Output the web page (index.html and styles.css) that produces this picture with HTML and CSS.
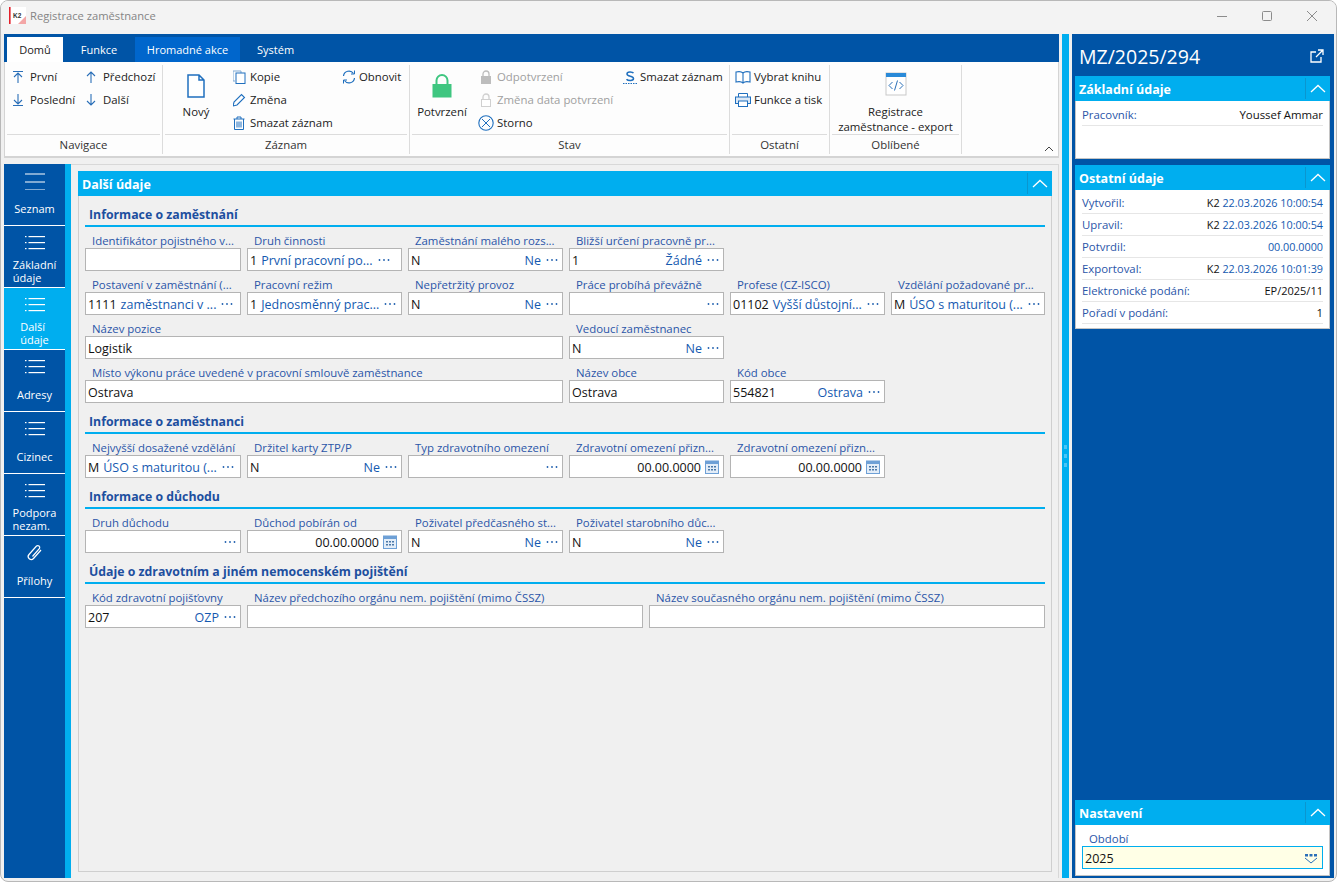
FILE: index.html
```html
<!DOCTYPE html>
<html lang="cs">
<head>
  <meta charset="UTF-8">
  <title>Registrace zaměstnance</title>
  <link rel="stylesheet" href="styles.css">
</head>
<body>

<svg class="defs" width="0" height="0">
  <symbol id="dots" viewBox="0 0 12 4"><circle cx="1.5" cy="2" r="0.9"/><circle cx="6" cy="2" r="0.9"/><circle cx="10.5" cy="2" r="0.9"/></symbol>
  <symbol id="chev" viewBox="0 0 16 9"><path d="M1 8 8 1.5 15 8" fill="none" stroke="#fff" stroke-width="1.3"/></symbol>
  <symbol id="listicon" viewBox="0 0 20 14"><g fill="#fff"><rect x="3.5" y="0" width="16.5" height="1.2"/><rect x="3.5" y="6" width="16.5" height="1.2"/><rect x="3.5" y="12" width="16.5" height="1.2"/><rect x="0" y="0" width="1.5" height="1.2"/><rect x="0" y="6" width="1.5" height="1.2"/><rect x="0" y="12" width="1.5" height="1.2"/></g></symbol>
  <symbol id="cal" viewBox="0 0 14 14"><rect x="0.5" y="1" width="13" height="12.5" fill="#e3edf8" stroke="#6ea0d6"/><rect x="0.5" y="1" width="13" height="3" fill="#6ea0d6"/><g fill="#4a78a8"><rect x="3" y="6" width="2" height="1.5"/><rect x="6" y="6" width="2" height="1.5"/><rect x="9" y="6" width="2" height="1.5"/><rect x="3" y="9" width="2" height="1.5"/><rect x="6" y="9" width="2" height="1.5"/><rect x="9" y="9" width="2" height="1.5"/></g></symbol>
</svg>

<div class="window">

  <div class="titlebar">
    <svg class="logo" width="17" height="17" viewBox="0 0 17 17">
      <rect x="0" y="0" width="17" height="17" fill="#fff"/>
      <rect x="0" y="0" width="1.6" height="17" fill="#e3202a"/>
      <path d="M9 17 17 9v8z" fill="#f3a6a6"/>
      <text x="4" y="10.5" class="logo-text">K2</text>
    </svg>
    <span class="title-text">Registrace zaměstnance</span>
    <div class="winbtns">
      <svg width="12" height="12" viewBox="0 0 12 12"><path d="M1 6.5h10" stroke="#8c8c8c"/></svg>
      <svg width="12" height="12" viewBox="0 0 12 12"><rect x="1.5" y="1.5" width="9" height="9" rx="1" fill="none" stroke="#8c8c8c"/></svg>
      <svg width="12" height="12" viewBox="0 0 12 12"><path d="M1 1 11 11M11 1 1 11" stroke="#8c8c8c"/></svg>
    </div>
  </div>

  <div class="main">
    <div class="left">

      <div class="tabs">
        <div class="tab tab-active">Domů</div>
        <div class="tab tab-funkce">Funkce</div>
        <div class="tab tab-bulk">Hromadné akce</div>
        <div class="tab">Systém</div>
      </div>

      <div class="ribbon">
        <!-- Navigace -->
        <div class="group g-nav">
          <div class="group-body">
            <div class="col c-nav1">
              <div class="ritem"><svg class="ico" viewBox="2 0 14 14"><path d="M2 1.5h10M7 13V3.5M3 7l4-4 4 4" fill="none" stroke="#2a6fb8" stroke-width="1.1"/></svg>První</div>
              <div class="ritem"><svg class="ico" viewBox="2 0 14 14"><path d="M2 12.5h10M7 1v9.5M3 7l4 4 4-4" fill="none" stroke="#2a6fb8" stroke-width="1.1"/></svg>Poslední</div>
            </div>
            <div class="col c-nav2">
              <div class="ritem"><svg class="ico" viewBox="2 0 14 14"><path d="M7 13V2M3 6l4-4 4 4" fill="none" stroke="#2a6fb8" stroke-width="1.1"/></svg>Předchozí</div>
              <div class="ritem"><svg class="ico" viewBox="2 0 14 14"><path d="M7 1v11M3 8l4 4 4-4" fill="none" stroke="#2a6fb8" stroke-width="1.1"/></svg>Další</div>
            </div>
          </div>
          <div class="group-label">Navigace</div>
        </div>

        <!-- Záznam -->
        <div class="group g-rec">
          <div class="group-body">
            <div class="big b-new">
              <svg width="18" height="24" viewBox="0 0 18 24"><path d="M1 1h11l5 5v17H1z M12 1v5h5" fill="#fff" stroke="#1f6fbe" stroke-width="1.5"/></svg>
              <span>Nový</span>
            </div>
            <div class="col c-rec">
              <div class="ritem"><svg class="ico" viewBox="1 0 14 14"><path d="M1 1h8v2M1 1v10h2" fill="none" stroke="#7fa9d4"/><rect x="4" y="3" width="9" height="10.5" fill="#fff" stroke="#1f6fbe"/></svg>Kopie</div>
              <div class="ritem"><svg class="ico" viewBox="1 0 14 14"><path d="M1 13l1-4 7.5-7.5 3 3L5 12z" fill="none" stroke="#1f6fbe" stroke-width="1.1"/></svg>Změna</div>
              <div class="ritem"><svg class="ico" viewBox="1 0 14 14"><path d="M1.5 3h11M5 3V1h4v2M2.5 3v10.5h9V3M5 5.5v6M7 5.5v6M9 5.5v6" fill="none" stroke="#1f6fbe"/></svg>Smazat záznam</div>
            </div>
            <div class="col">
              <div class="ritem"><svg class="ico" viewBox="0 0 14 14"><path d="M1.5 6A5.5 5.5 0 0 1 11.5 3.5M12.5 8A5.5 5.5 0 0 1 2.5 10.5" fill="none" stroke="#1f6fbe" stroke-width="1.2"/><path d="M9 4h3.5V.5M5 10H1.5v3.5" fill="none" stroke="#1f6fbe"/></svg>Obnovit</div>
            </div>
          </div>
          <div class="group-label">Záznam</div>
        </div>

        <!-- Stav -->
        <div class="group g-state">
          <div class="group-body">
            <div class="big b-lock">
              <svg width="20" height="24" viewBox="0 0 20 24"><path d="M4.5 11V6.5a5.5 5.5 0 0 1 11 0V11" fill="none" stroke="#3fc680" stroke-width="2"/><rect x="0.5" y="10" width="19" height="13.5" fill="#3fc680"/></svg>
              <span>Potvrzení</span>
            </div>
            <div class="col c-state">
              <div class="ritem off"><svg class="ico ico-w" viewBox="0 0 16 14"><path d="M5 6V4a3 3 0 0 1 6 0v2" fill="none" stroke="#bdbdbd" stroke-width="1.3"/><rect x="3" y="6" width="10" height="8" fill="#bdbdbd"/></svg>Odpotvrzení</div>
              <div class="ritem off"><svg class="ico ico-w" viewBox="0 0 16 14"><path d="M5 6V4a3 3 0 0 1 6 0v2" fill="none" stroke="#d0d0d0" stroke-width="1.3"/><rect x="3.5" y="6.5" width="9" height="7" fill="#fff" stroke="#d0d0d0"/></svg>Změna data potvrzení</div>
              <div class="ritem"><svg class="ico ico-w" viewBox="0 0 16 16"><circle cx="8" cy="8" r="7.2" fill="none" stroke="#1f6fbe" stroke-width="1.1"/><path d="M4 4 12 12M12 4 4 12" stroke="#1f6fbe"/></svg>Storno</div>
            </div>
            <div class="col">
              <div class="ritem"><svg class="ico" viewBox="0 0 14 14"><path d="M10.5 3.2C9.5 1.6 4 1.2 4 4c0 3 6.5 1.6 6.5 4.6 0 2.600-5.500 2.400-7 .6" fill="none" stroke="#1f6fbe" stroke-width="1.5"/><path d="M0 13.500h14" stroke="#1f6fbe" stroke-dasharray="1.500 1"/></svg>Smazat záznam</div>
            </div>
          </div>
          <div class="group-label">Stav</div>
        </div>

        <!-- Ostatní -->
        <div class="group g-other">
          <div class="group-body">
            <div class="col c-other">
              <div class="ritem"><svg class="ico ico-w" viewBox="0 0 16 14"><path d="M8 3C6.500 1.500 3 1.500 1 2v10c2-.5 5.500-.5 7 1 1.500-1.500 5-1.500 7-1V2C13 1.500 9.500 1.500 8 3zM8 3v10" fill="#fff" stroke="#1f6fbe" stroke-width="1.1"/></svg>Vybrat knihu</div>
              <div class="ritem"><svg class="ico ico-w" viewBox="0 0 16 14"><path d="M3.500 4V.5h9V4" fill="#fff" stroke="#1f6fbe"/><rect x="0.500" y="4" width="15" height="6.500" fill="#dce8f5" stroke="#1f6fbe"/><rect x="3.500" y="8" width="9" height="5.500" fill="#fff" stroke="#1f6fbe"/></svg>Funkce a tisk</div>
            </div>
          </div>
          <div class="group-label">Ostatní</div>
        </div>

        <!-- Oblíbené -->
        <div class="group g-fav">
          <div class="group-body">
            <div class="big b-export">
              <svg width="22" height="24" viewBox="0 0 22 24"><rect x="1" y="1" width="20" height="22" fill="#fff" stroke="#c9c9c9"/><rect x="1" y="1" width="20" height="4" fill="#2a8ad8"/><path d="M7.500 10 4 13.500 7.500 17M14.500 10 18 13.500 14.500 17M12.500 8.500 9.500 18.500" fill="none" stroke="#2a6fb8"/></svg>
              <span>Registrace<br>zaměstnance - export</span>
            </div>
          </div>
          <div class="group-label">Oblíbené</div>
        </div>

        <svg class="ribbon-chev" width="10" height="6" viewBox="0 0 10 6"><path d="M1 5 5 1l4 4" fill="none" stroke="#444"/></svg>
      </div>

      <div class="workspace">
        <div class="sidenav">
          <div class="navitem">
            <svg class="nav-ico" width="20" height="18" viewBox="0 -1 20 18"><path d="M0 1h20M0 9h20M0 17h20" stroke="#fff" stroke-width="1.2"/></svg>
            <div class="nav-label single">Seznam</div>
          </div>
          <div class="navitem">
            <svg class="nav-ico" width="20" height="14"><use href="#listicon"/></svg>
            <div class="nav-label">Základní<br>údaje</div>
          </div>
          <div class="navitem navitem-active">
            <svg class="nav-ico" width="20" height="14"><use href="#listicon"/></svg>
            <div class="nav-label">Další<br>údaje</div>
          </div>
          <div class="navitem">
            <svg class="nav-ico" width="20" height="14"><use href="#listicon"/></svg>
            <div class="nav-label single">Adresy</div>
          </div>
          <div class="navitem">
            <svg class="nav-ico" width="20" height="14"><use href="#listicon"/></svg>
            <div class="nav-label single">Cizinec</div>
          </div>
          <div class="navitem">
            <svg class="nav-ico" width="20" height="14"><use href="#listicon"/></svg>
            <div class="nav-label">Podpora<br>nezam.</div>
          </div>
          <div class="navitem">
            <svg class="nav-ico" width="20" height="20" viewBox="0 0 18 18"><path d="M15 6 7.500 14.500a3 3 0 0 1-4.500-4L10.500 2a2 2 0 0 1 3 2.500L6.500 12.500" fill="none" stroke="#fff" stroke-width="1.200"/></svg>
            <div class="nav-label single">Přílohy</div>
          </div>
        </div>
        <div class="nav-strip"></div>

        <div class="content">
          <div class="panel">
            <div class="head head-main">
              <span>Další údaje</span>
              <div class="head-btn"><svg width="16" height="9"><use href="#chev"/></svg></div>
            </div>
            <div class="form">

              <div class="section">Informace o zaměstnání</div>
              <div class="grid">
                <div class="field"><label>Identifikátor pojistného v...</label><div class="input"></div></div>
                <div class="field"><label>Druh činnosti</label><div class="input"><b>1</b> <span class="val">První pracovní po...</span><svg class="dots"><use href="#dots"/></svg></div></div>
                <div class="field"><label>Zaměstnání malého rozs...</label><div class="input"><b>N</b><span class="val right">Ne</span><svg class="dots"><use href="#dots"/></svg></div></div>
                <div class="field"><label>Bližší určení pracovně pr...</label><div class="input"><b>1</b><span class="val right">Žádné</span><svg class="dots"><use href="#dots"/></svg></div></div>
                <div class="field"></div>
                <div class="field"></div>

                <div class="field"><label>Postavení v zaměstnání (...</label><div class="input"><b>1111</b> <span class="val">zaměstnanci v ...</span><svg class="dots"><use href="#dots"/></svg></div></div>
                <div class="field"><label>Pracovní režim</label><div class="input"><b>1</b> <span class="val">Jednosměnný prac...</span><svg class="dots"><use href="#dots"/></svg></div></div>
                <div class="field"><label>Nepřetržitý provoz</label><div class="input"><b>N</b><span class="val right">Ne</span><svg class="dots"><use href="#dots"/></svg></div></div>
                <div class="field"><label>Práce probíhá převážně</label><div class="input"><span class="val right"></span><svg class="dots"><use href="#dots"/></svg></div></div>
                <div class="field"><label>Profese (CZ-ISCO)</label><div class="input"><b>01102</b> <span class="val">Vyšší důstojní...</span><svg class="dots"><use href="#dots"/></svg></div></div>
                <div class="field"><label>Vzdělání požadované pr...</label><div class="input"><b>M</b> <span class="val">ÚSO s maturitou (...</span><svg class="dots"><use href="#dots"/></svg></div></div>

                <div class="field span3"><label>Název pozice</label><div class="input"><b>Logistik</b></div></div>
                <div class="field"><label>Vedoucí zaměstnanec</label><div class="input"><b>N</b><span class="val right">Ne</span><svg class="dots"><use href="#dots"/></svg></div></div>
                <div class="field"></div>
                <div class="field"></div>

                <div class="field span3"><label>Místo výkonu práce uvedené v pracovní smlouvě zaměstnance</label><div class="input"><b>Ostrava</b></div></div>
                <div class="field"><label>Název obce</label><div class="input"><b>Ostrava</b></div></div>
                <div class="field"><label>Kód obce</label><div class="input"><b>554821</b><span class="val right">Ostrava</span><svg class="dots"><use href="#dots"/></svg></div></div>
              </div>

              <div class="section">Informace o zaměstnanci</div>
              <div class="grid">
                <div class="field"><label>Nejvyšší dosažené vzdělání</label><div class="input"><b>M</b> <span class="val">ÚSO s maturitou (...</span><svg class="dots"><use href="#dots"/></svg></div></div>
                <div class="field"><label>Držitel karty ZTP/P</label><div class="input"><b>N</b><span class="val right">Ne</span><svg class="dots"><use href="#dots"/></svg></div></div>
                <div class="field"><label>Typ zdravotního omezení</label><div class="input"><span class="val right"></span><svg class="dots"><use href="#dots"/></svg></div></div>
                <div class="field"><label>Zdravotní omezení přizn...</label><div class="input"><b class="right">00.00.0000</b><svg class="cal"><use href="#cal"/></svg></div></div>
                <div class="field"><label>Zdravotní omezení přizn...</label><div class="input"><b class="right">00.00.0000</b><svg class="cal"><use href="#cal"/></svg></div></div>
              </div>

              <div class="section">Informace o důchodu</div>
              <div class="grid">
                <div class="field"><label>Druh důchodu</label><div class="input"><span class="val right"></span><svg class="dots"><use href="#dots"/></svg></div></div>
                <div class="field"><label>Důchod pobírán od</label><div class="input"><b class="right">00.00.0000</b><svg class="cal"><use href="#cal"/></svg></div></div>
                <div class="field"><label>Poživatel předčasného st...</label><div class="input"><b>N</b><span class="val right">Ne</span><svg class="dots"><use href="#dots"/></svg></div></div>
                <div class="field"><label>Poživatel starobního důc...</label><div class="input"><b>N</b><span class="val right">Ne</span><svg class="dots"><use href="#dots"/></svg></div></div>
              </div>

              <div class="section">Údaje o zdravotním a jiném nemocenském pojištění</div>
              <div class="grid grid-last">
                <div class="field"><label>Kód zdravotní pojišťovny</label><div class="input"><b>207</b><span class="val right">OZP</span><svg class="dots"><use href="#dots"/></svg></div></div>
                <div class="field"><label>Název předchozího orgánu nem. pojištění (mimo ČSSZ)</label><div class="input"></div></div>
                <div class="field"><label>Název současného orgánu nem. pojištění (mimo ČSSZ)</label><div class="input"></div></div>
              </div>

            </div>
          </div>
        </div>
      </div>
    </div>

    <div class="splitter"><i></i><i></i><i></i></div>

    <div class="side">
      <div class="side-title">
        <span>MZ/2025/294</span>
        <svg width="14" height="14" viewBox="0 0 14 14"><path d="M8 1h5v5M13 1 6 8" fill="none" stroke="#fff" stroke-width="1.300"/><path d="M6 3H1v10h10V8" fill="none" stroke="#fff" stroke-width="1.300"/></svg>
      </div>

      <div class="card">
        <div class="head head-side">
          <span>Základní údaje</span>
          <div class="head-btn"><svg width="16" height="9"><use href="#chev"/></svg></div>
        </div>
        <div class="card-body body-basic">
          <div class="row"><span class="row-l">Pracovník:</span><span class="row-v">Youssef Ammar</span></div>
        </div>
      </div>

      <div class="card">
        <div class="head head-side">
          <span>Ostatní údaje</span>
          <div class="head-btn"><svg width="16" height="9"><use href="#chev"/></svg></div>
        </div>
        <div class="card-body body-other">
          <div class="row"><span class="row-l">Vytvořil:</span><span class="row-b"><em>K2</em> 22.03.2026 10:00:54</span></div>
          <div class="row"><span class="row-l">Upravil:</span><span class="row-b"><em>K2</em> 22.03.2026 10:00:54</span></div>
          <div class="row"><span class="row-l">Potvrdil:</span><span class="row-b">00.00.0000</span></div>
          <div class="row"><span class="row-l">Exportoval:</span><span class="row-b"><em>K2</em> 22.03.2026 10:01:39</span></div>
          <div class="row"><span class="row-l">Elektronické podání:</span><span class="row-v row-num">EP/2025/11</span></div>
          <div class="row"><span class="row-l">Pořadí v podání:</span><span class="row-v">1</span></div>
        </div>
      </div>

      <div class="card card-bottom">
        <div class="head head-side">
          <span>Nastavení</span>
          <div class="head-btn"><svg width="16" height="9"><use href="#chev"/></svg></div>
        </div>
        <div class="card-body body-settings">
          <label>Období</label>
          <div class="input input-year"><b>2025</b>
            <svg class="pick" width="14" height="11" viewBox="0 0 14 11"><path d="M1 1h3v2.500H1zM5.500 1h3v2.500h-3zM10 1h3v2.500h-3z" fill="#2a6fb8"/><path d="M1 5 7 10l6-5" fill="none" stroke="#2a6fb8"/></svg>
          </div>
        </div>
      </div>
    </div>
  </div>
</div>

</body>
</html>
```

FILE: styles.css
```css
* {
  box-sizing: border-box;
}
html, body {
  margin: 0;
  padding: 0;
  background: #fff;
}
body {
  font-family: "Open Sans", "Noto Sans", sans-serif;
  font-size: 11.4px;
  color: #222;
}
.defs {
  position: absolute;
}
.window {
  width: 1337px;
  height: 882px;
  border: 1px solid #b8b8b8;
  border-radius: 8px;
  background: #f0f0f0;
  overflow: hidden;
  display: flex;
  flex-direction: column;
}

/* title bar */
.titlebar {
  height: 33px;
  flex: none;
  background: #f3f3f3;
  display: flex;
  align-items: center;
  padding-left: 8px;
  padding-bottom: 4px;
}
.logo {
  margin-right: 4px;
}
.logo-text {
  font-family: "Liberation Sans", sans-serif;
  font-size: 6.5px;
  font-weight: bold;
  fill: #333;
}
.title-text {
  font-size: 11.2px;
  color: #858585;
}
.winbtns {
  margin-left: auto;
  display: flex;
  gap: 33px;
  padding-right: 18px;
}

.main {
  flex: 1;
  display: flex;
  padding: 0 2px 3px 3px;
  min-height: 0;
}
.left {
  width: 1055px;
  display: flex;
  flex-direction: column;
}

/* ribbon */
.tabs {
  height: 28px;
  flex: none;
  background: #0054a6;
  display: flex;
  align-items: flex-end;
  padding-left: 3px;
  font-size: 11px;
}
.tab {
  height: 25px;
  line-height: 25px;
  color: #fff;
  padding: 0 17px;
}
.tab-active {
  width: 56px;
  padding: 0;
  text-align: center;
  background: #fff;
  color: #222;
}
.tab-funkce {
  width: 72px;
  padding: 0;
  text-align: center;
}
.tab-bulk {
  width: 105px;
  padding: 0;
  text-align: center;
  background: #0066cc;
}
.ribbon {
  height: 96px;
  flex: none;
  background: #fdfdfd;
  border: 1px solid #d4d4d4;
  border-top: 0;
  border-bottom-width: 2px;
  display: flex;
  position: relative;
}
.group {
  border-right: 1px solid #dcdcdc;
  margin: 3px 0 2px;
  padding: 0 2px;
  display: flex;
  flex-direction: column;
}
.g-nav { width: 158px; }
.g-rec { width: 247px; }
.g-state { width: 320px; }
.g-other { width: 100px; }
.g-fav { width: 132px; }
.group-body {
  height: 69px;
  flex: none;
  display: flex;
}
.group-label {
  border-top: 1px solid #dcdcdc;
  flex: 1;
  text-align: center;
  line-height: 19px;
  color: #333;
}
.col {
  display: flex;
  flex-direction: column;
}
.ritem {
  height: 23px;
  display: flex;
  align-items: center;
  gap: 3px;
  white-space: nowrap;
}
.ico {
  width: 14px;
  height: 14px;
  flex: none;
}
.ico-w {
  width: 16px;
  height: 16px;
}
.off {
  color: #a0a0a0;
}
.c-nav1 {
  width: 79px;
  padding-left: 6px;
}
.c-rec {
  width: 109px;
}
.c-state {
  width: 145px;
}
.c-other {
  padding-left: 3px;
}
.big {
  display: flex;
  flex-direction: column;
  align-items: center;
  text-align: center;
  padding-top: 9px;
}
.big svg {
  flex: none;
}
.big span {
  margin-top: 6px;
  line-height: 15px;
}
.b-new {
  width: 68px;
  padding-right: 6px;
}
.b-lock {
  width: 60px;
  margin-right: 6px;
}
.b-export {
  width: 128px;
  padding-top: 7px;
}
.b-export span {
  margin-top: 8px;
}
.ribbon-chev {
  position: absolute;
  right: 4px;
  bottom: 4px;
}

/* workspace */
.workspace {
  flex: 1;
  margin-top: 6px;
  display: flex;
  min-height: 0;
}
.sidenav {
  width: 61px;
  flex: none;
  background: #0054a6;
}
.navitem {
  height: 62px;
  border-bottom: 1px solid #fff;
  color: #fff;
  display: flex;
  flex-direction: column;
  align-items: center;
}
.navitem-active {
  background: #00aeef;
}
.nav-ico {
  height: 18px;
  margin-top: 8px;
  flex: none;
}
.nav-label {
  height: 30px;
  margin-top: 4px;
  line-height: 13px;
  display: flex;
  align-items: center;
  font-size: 11px;
}
.single {
  padding-bottom: 2px;
}
.nav-strip {
  width: 6px;
  flex: none;
  background: #00aeef;
}
.content {
  flex: 1;
  border-top: 1px solid #d8d8d8;
  border-right: 1px solid #d8d8d8;
  padding: 6px 6px 6px 7px;
}
.panel {
  height: 100%;
  border: 1px solid #cfcfcf;
  border-top: 0;
}
.head {
  height: 25px;
  background: #00aeef;
  color: #fff;
  font-weight: bold;
  font-size: 12.5px;
  display: flex;
  align-items: center;
  justify-content: space-between;
  padding-left: 4px;
  margin: 0 -1px;
}
.head span {
  padding-top: 2px;
}
.head-btn {
  width: 25px;
  height: 21px;
  border-left: 1px solid #0a96cf;
  display: flex;
  align-items: center;
  justify-content: center;
}
.form {
  padding: 0 6px;
}
.section {
  height: 31px;
  border-bottom: 2px solid #00aeef;
  padding: 11px 0 0 4px;
  line-height: 16px;
  font-weight: bold;
  font-size: 12.3px;
  color: #1d4f9f;
}
.grid {
  display: grid;
  grid-template-columns: 156px repeat(4, 155px) 154px;
  column-gap: 6px;
}
.grid-last {
  grid-template-columns: 156px 396px 396px;
}
.span3 {
  grid-column: span 3;
}
.field {
  height: 44px;
  display: flex;
  flex-direction: column;
}
.field label, .body-settings label {
  display: block;
  height: 21px;
  padding: 6px 0 0 7px;
  line-height: 15px;
  color: #2a55a8;
  white-space: nowrap;
}
.input {
  height: 23px;
  background: #fff;
  border: 1px solid #b4b4b4;
  display: flex;
  align-items: center;
  padding: 1px 3px 0 2px;
  font-size: 12.5px;
  white-space: nowrap;
  gap: 4px;
}
.input b {
  font-weight: normal;
  color: #111;
}
.val {
  color: #1459b0;
}
.right {
  margin-left: auto;
}
.dots {
  width: 12px;
  height: 4px;
  flex: none;
  margin: 0 1px 0 1px;
  fill: #1f5fae;
}
.cal {
  width: 14px;
  height: 14px;
  flex: none;
  margin-right: 1px;
}

/* splitter */
.splitter {
  width: 7px;
  flex: none;
  margin: 0 3px;
  background: #00aeef;
  display: flex;
  flex-direction: column;
  justify-content: center;
  align-items: center;
  gap: 5px;
}
.splitter i {
  width: 3px;
  height: 4px;
  background: #4cc4f5;
}

/* right panel */
.side {
  width: 262px;
  flex: none;
  background: #0054a6;
  padding: 0 4px 2px 3px;
  display: flex;
  flex-direction: column;
}
.side-title {
  height: 42px;
  flex: none;
  color: #fff;
  font-size: 19.5px;
  display: flex;
  align-items: center;
  justify-content: space-between;
  padding: 2px 6px 0 4px;
}
.card {
  margin-bottom: 6px;
  flex: none;
}
.card-bottom {
  margin-top: auto;
  margin-bottom: 0;
}
.head-side {
  margin: 0;
  padding-left: 4px;
}
.card-body {
  background: #fff;
  border: 1px solid #c4c4c4;
  border-top: 0;
  padding: 0 6px;
}
.body-basic {
  height: 58px;
  padding-top: 3px;
}
.body-other {
  height: 139px;
  padding-top: 2px;
}
.body-settings {
  height: 51px;
}
.row {
  height: 22px;
  border-bottom: 1px solid #e6e6e6;
  display: flex;
  align-items: center;
  justify-content: space-between;
  white-space: nowrap;
}
.row-l {
  color: #2a55a8;
}
.row-v {
  color: #111;
}
.row-num {
  font-size: 11px;
}
.row-b {
  font-size: 10.8px;
  color: #1459b0;
}
.row-b em {
  font-style: normal;
  color: #111;
}
.input-year {
  background: #ffffe6;
  border-color: #00aeef;
  padding-right: 4px;
}
.pick {
  margin-left: auto;
}
```
